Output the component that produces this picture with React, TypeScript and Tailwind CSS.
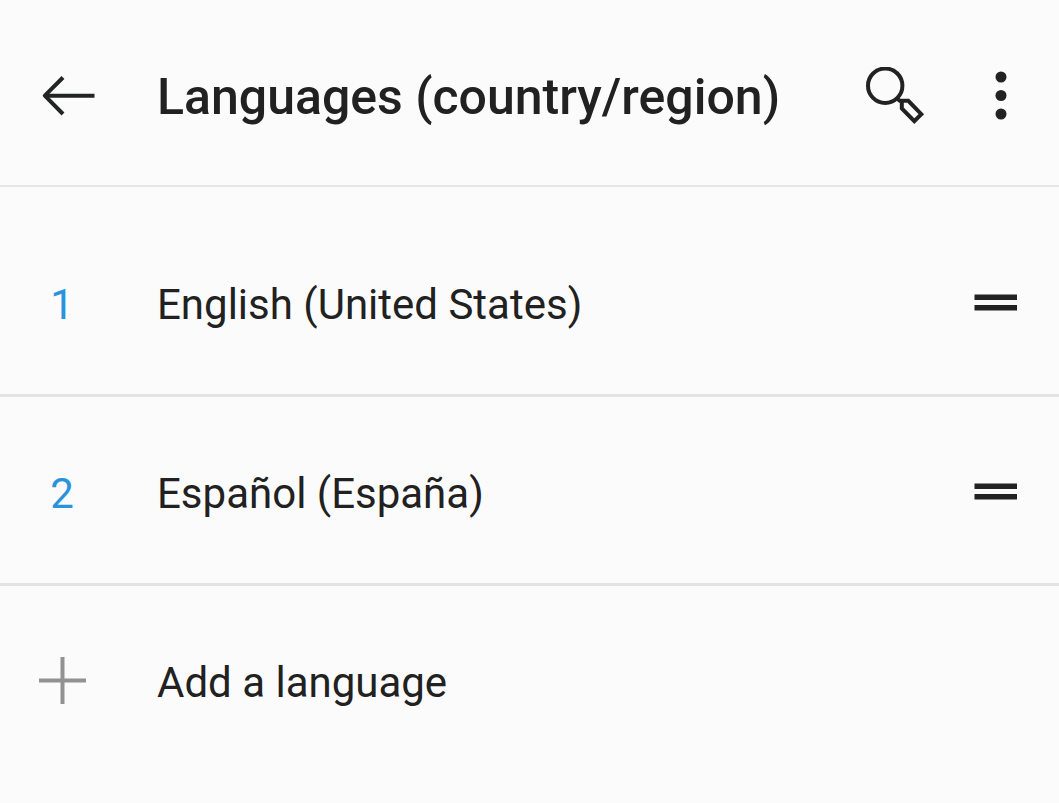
import React, { useState } from 'react';

interface Language {
  id: string;
  name: string;
}

const LANGUAGES: Language[] = [
  { id: 'en-US', name: 'English (United States)' },
  { id: 'es-ES', name: 'Español (España)' },
];

function BackIcon() {
  return (
    <svg width="56" height="44" viewBox="0 0 56 44" fill="none" stroke="#232525" strokeWidth="4" aria-hidden="true">
      <path d="M54.5 20.7H5" />
      <path d="M23 2.5L4.8 20.7L23 39" strokeLinejoin="round" />
    </svg>
  );
}

function SearchIcon() {
  return (
    <svg width="60" height="60" viewBox="0 0 60 60" fill="none" stroke="#222222" strokeWidth="4" aria-hidden="true">
      <circle cx="20.2" cy="18.7" r="17.2" />
      <path d="M32 31.5L34.8 33.8H43.3L56.3 47.2L49.3 54.2L36.8 41.5V33.8" />
    </svg>
  );
}

function MoreIcon() {
  return (
    <svg width="32" height="60" viewBox="0 0 32 60" fill="#222222" aria-hidden="true">
      <circle cx="16" cy="10" r="5.5" />
      <circle cx="16" cy="28.5" r="5.5" />
      <circle cx="16" cy="47" r="5.5" />
    </svg>
  );
}

function DragHandleIcon() {
  return (
    <svg width="43" height="22" viewBox="0 0 43 22" fill="#222222" aria-hidden="true">
      <rect x="0.5" y="0.5" width="42.5" height="5.5" />
      <rect x="0.5" y="11" width="42.5" height="5.5" />
    </svg>
  );
}

function PlusIcon() {
  return (
    <svg width="48" height="52" viewBox="0 0 48 52" stroke="#929292" strokeWidth="4" aria-hidden="true">
      <path d="M1 23.5H48M24.5 0V47" />
    </svg>
  );
}

export default function App() {
  const [languages] = useState<Language[]>(LANGUAGES);

  return (
    <div className="min-h-screen bg-[#fbfbfb] font-[Roboto,sans-serif] text-[#212121]">
      {/* App bar */}
      <header className="flex items-center border-b-2 border-[#e6e6e6] pt-[65px] pr-[42px] pb-14 pl-10">
        <button type="button" aria-label="Back" className="w-[117px] shrink-0">
          <BackIcon />
        </button>
        <h1 className="min-w-0 flex-1 text-[50px] leading-[64px] font-medium whitespace-nowrap">
          Languages (country/region)
        </h1>
        <div className="flex shrink-0 items-center gap-[60px]">
          <button type="button" aria-label="Search">
            <SearchIcon />
          </button>
          <button type="button" aria-label="More options">
            <MoreIcon />
          </button>
        </div>
      </header>

      {/* Preferred languages, in order */}
      <main className="pt-[21px] text-[42px] leading-[64px]">
        <ol>
          {languages.map((language, index) => (
            <li
              key={language.id}
              className="flex items-center border-b-3 border-[#e3e3e3] pt-[65px] pr-[42px] pb-[57px] pl-[38px]"
            >
              <span className="w-12 shrink-0 text-center text-[#2a93dc]">{index + 1}</span>
              <span className="ml-[71px] min-w-0 flex-1 whitespace-nowrap">{language.name}</span>
              <button type="button" aria-label={`Reorder ${language.name}`} className="shrink-0">
                <DragHandleIcon />
              </button>
            </li>
          ))}
        </ol>

        <button type="button" className="flex w-full items-center pt-[65px] pr-[42px] pb-[57px] pl-[38px] text-left">
          <span className="w-12 shrink-0">
            <PlusIcon />
          </span>
          <span className="ml-[71px] whitespace-nowrap">Add a language</span>
        </button>
      </main>
    </div>
  );
}
